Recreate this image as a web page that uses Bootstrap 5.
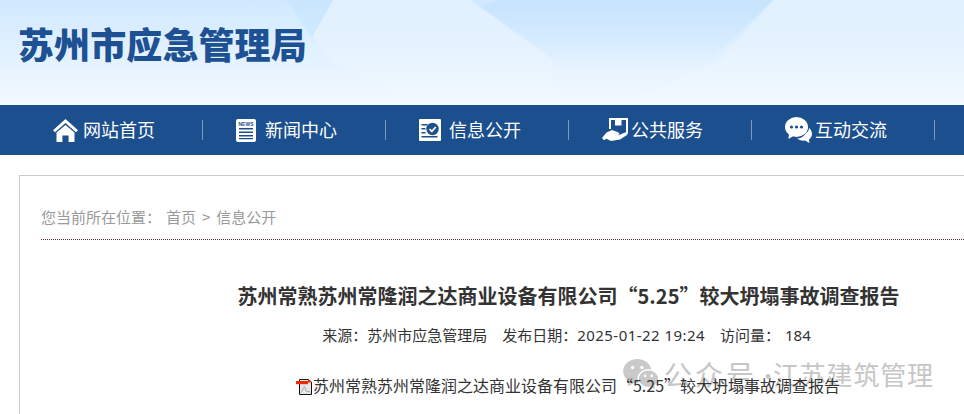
<!DOCTYPE html>
<html lang="zh-CN">
<head>
<meta charset="utf-8">
<title>苏州市应急管理局</title>
<link href="https://cdn.jsdelivr.net/npm/bootstrap@5.3.0/dist/css/bootstrap.min.css" rel="stylesheet">
<style>
html,body{overflow:hidden;width:964px;height:414px;background:#fff}
body{font-family:"Noto Sans CJK SC",sans-serif;color:#333}
.site-shell{width:1130px}
.site-head{height:105px;position:relative;overflow:hidden;background:linear-gradient(180deg,#d0e9ff 0%,#f3f9ff 100%)}
.head-art{position:absolute;left:0;top:0;width:100%;height:100%}
.site-name{position:relative;margin:0;padding:20px 0 0 18px;font-size:36px;line-height:46px;font-weight:900;letter-spacing:.1px;color:#1d5193}
.site-nav{height:50px;background:#1c4f8e;padding-left:19px;flex-wrap:nowrap}
.nav-cell{width:183px;height:50px;display:flex;align-items:center;position:relative}
.nav-cell::after{content:"";position:absolute;right:-1px;top:15px;height:20px;width:1px;background:#7d9bc0}
.nav-cell .nav-link{display:flex;align-items:center;padding:0 0 0 34px;color:#fff;font-size:18px;line-height:26px;white-space:nowrap}
.nav-label{padding-bottom:2px}
.nav-ic{display:block;flex:none}
.ic-a{margin-right:5px}.ic-b{margin-right:9px}.ic-c{margin-right:8px}.ic-d{margin-right:2px}.ic-e{margin-right:3px}
.art-box{margin:20px 0 0 19px;border:1px solid #ccc;border-right:0;padding:0 0 0 21px;height:260px;position:relative}
.crumb{height:64px;border-bottom:1px dotted #5a2a2a;padding-top:30px;font-size:15px;line-height:21px;color:#999;white-space:nowrap}
.crumb-gap{margin-left:5px}
.crumb-sep{margin:0 6px}
.art-title{margin:41px 0 0 0;width:1055px;text-align:center;font-size:20px;line-height:30px;font-weight:700;color:#333}
.art-meta{position:relative;z-index:1;margin:12px 0 0;width:1051px;text-align:center;font-size:15px;line-height:24px;color:#333}
.meta-part{margin-right:15px}
.meta-num{font-family:"Noto Sans",sans-serif;letter-spacing:.45px}
.meta-count{font-family:"Noto Sans",sans-serif;margin-left:5px}
.art-file{position:relative;z-index:1;margin:26px 0 0;width:1054px;font-size:16px;line-height:24px;color:#333;display:flex;justify-content:center;align-items:center}
.file-ic{flex:none;margin-top:2px}
.wm{position:absolute;left:603px;top:180px;display:flex;align-items:center;color:#c6c6c6;line-height:36px;white-space:nowrap;pointer-events:none}
.wm-ic{margin-right:5px;flex:none}
.wm-a{font-size:28px;letter-spacing:3px}
.wm-dot{display:inline-block;width:16px;text-align:center;font-size:22px}
.wm-b{font-size:26px;letter-spacing:.8px}
</style>
</head>
<body>
<div class="site-shell">
  <header class="site-head">
    <svg class="head-art" viewBox="0 0 1130 105" preserveAspectRatio="none" aria-hidden="true">
      <defs>
        <linearGradient id="fadeW" x1="0" y1="0" x2="0" y2="1"><stop offset="0" stop-color="#fff" stop-opacity=".35"/><stop offset="1" stop-color="#fff" stop-opacity="0"/></linearGradient>
        <linearGradient id="fadeD" x1="0" y1="0" x2="0" y2="1"><stop offset="0" stop-color="#bfe0fd" stop-opacity=".55"/><stop offset="1" stop-color="#bfe0fd" stop-opacity="0"/></linearGradient>
      </defs>
      <path d="M333 0 L312 36 L330 60 L420 105 L560 105 L552 60 L470 0Z" fill="url(#fadeW)"/>
      <path d="M287 0 L333 0 L312 38Z" fill="#c6e4fe" opacity=".6"/>
      <path d="M480 6 L555 60 L700 70 L773 0 L500 0Z" fill="url(#fadeD)"/>
      <path d="M773 0 L1130 0 L1130 105 L620 105 L720 60Z" fill="url(#fadeW)"/>
    </svg>
    <h1 class="site-name">苏州市应急管理局</h1>
  </header>
  <nav class="nav site-nav">
    <div class="nav-cell"><a class="nav-link" href="#">
      <svg class="nav-ic ic-a" width="25" height="23" viewBox="0 0 25 23"><path fill="#fff" d="M12.500 0 25 11.200 23 13.200 12.500 4 2 13.200 0 11.200Z"/><path fill="#fff" d="M12.500 6 21.500 13.600V23H15.600V16.500H9.400V23H3.500V13.600Z"/></svg>
      <span class="nav-label">网站首页</span></a></div>
    <div class="nav-cell"><a class="nav-link" href="#">
      <svg class="nav-ic ic-b" width="20" height="23" viewBox="0 0 20 23"><rect width="20" height="23" rx="2" fill="#fff"/><text x="10" y="7" text-anchor="middle" font-size="5" font-weight="700" font-family="Liberation Sans" fill="#1c4f8e">NEWS</text><path fill="#1c4f8e" d="M3 9h14v1.600H3zM3 12.500h14v1.600H3zM3 16h14v1.600H3zM3 19h14v1.200H3z"/></svg>
      <span class="nav-label">新闻中心</span></a></div>
    <div class="nav-cell"><a class="nav-link" href="#">
      <svg class="nav-ic ic-c" width="22" height="22" viewBox="0 0 22 22"><rect width="22" height="22" rx="1" fill="#fff"/><path fill="#1c4f8e" d="M2.500 5h6v1.600h-6zM2.500 9h4v1.600h-4zM2.500 13h4v1.600h-4zM2.500 17h16v1.600h-16z"/><circle cx="13.500" cy="10" r="6.200" fill="#1c4f8e"/><path fill="none" stroke="#fff" stroke-width="1.700" d="M10.500 10l2.300 2.400 4-4.400"/></svg>
      <span class="nav-label">信息公开</span></a></div>
    <div class="nav-cell"><a class="nav-link" href="#">
      <svg class="nav-ic ic-d" width="27" height="24" viewBox="0 0 27 24"><path fill="#fff" d="M7 0h19v15.500h-2V2H9v9H7Z"/><path fill="#fff" d="M13 2h6.500v5.500h-6.500Z"/><path fill="#fff" d="M0 20l4.500-5.500 5.500-2.500 6.500 2.500c1.500.8.800 2.800-.8 2.500l-3.700-.6 4.500.8 6.500-2.700c2-.5 3.300 1 2 2.400l-7 4.500-9 1.600-4.500-2.300-2.500 1.600Z"/></svg>
      <span class="nav-label">公共服务</span></a></div>
    <div class="nav-cell"><a class="nav-link" href="#">
      <svg class="nav-ic ic-e" width="27" height="26" viewBox="0 0 27 26"><path fill="#fff" d="M21 16c2-1 3-3 3-5 0 0 3 2 3 6 0 2.500-1.500 4.500-3 5.500l.5 3.500-4.500-2.500c-3 .5-6-.5-8-2 4 0 7-2 9-5.500Z"/><ellipse cx="11.500" cy="10" rx="11.500" ry="10" fill="#fff"/><path fill="#fff" d="M4 16 3.500 22 10 18Z"/><circle cx="6.500" cy="10" r="1.600" fill="#1c4f8e"/><circle cx="11.500" cy="10" r="1.600" fill="#1c4f8e"/><circle cx="16.500" cy="10" r="1.600" fill="#1c4f8e"/></svg>
      <span class="nav-label">互动交流</span></a></div>
    <div class="nav-cell"></div>
  </nav>
  <main class="art-box">
    <div class="crumb">您当前所在位置：<span class="crumb-gap">首页</span><span class="crumb-sep">&gt;</span>信息公开</div>
    <h2 class="art-title">苏州常熟苏州常隆润之达商业设备有限公司“5.25”较大坍塌事故调查报告</h2>
    <p class="art-meta"><span class="meta-part">来源：苏州市应急管理局</span><span class="meta-part">发布日期：<span class="meta-num">2025-01-22 19:24</span></span>访问量：<span class="meta-count">184</span></p>
    <p class="art-file">
      <svg class="file-ic" width="17" height="17" viewBox="0 0 17 17"><path d="M3.500 1.500H12L15.500 4V16.500H3.500Z" fill="#e6e6e6" stroke="#111"/><path d="M0 3H12V6.200H0Z" fill="#f02a00"/><path d="M12 1l4 3.500h-4Z" fill="#f02a00"/><path d="M5 14.500l3.500-6 1.500 4.500 4.500 1" fill="none" stroke="#aaa"/></svg>
      <span>苏州常熟苏州常隆润之达商业设备有限公司“5.25”较大坍塌事故调查报告</span>
    </p>
    <div class="wm">
      <svg class="wm-ic" width="36" height="30" viewBox="0 0 38 32"><ellipse cx="15" cy="13" rx="15" ry="13" fill="#c9c9c9"/><path d="M6 22 5 29 13 25Z" fill="#c9c9c9"/><ellipse cx="27" cy="21" rx="11" ry="9.500" fill="#c9c9c9" stroke="#fff" stroke-width="1.500"/><path d="M33 28 34 32 28 30Z" fill="#c9c9c9"/><circle cx="10" cy="9" r="1.800" fill="#fff"/><circle cx="20" cy="9" r="1.800" fill="#fff"/><circle cx="23.500" cy="18" r="1.400" fill="#fff"/><circle cx="30.500" cy="18" r="1.400" fill="#fff"/></svg>
      <span class="wm-a">公众号</span><span class="wm-dot">·</span><span class="wm-b">江苏建筑管理</span>
    </div>
  </main>
</div>
</body>
</html>
